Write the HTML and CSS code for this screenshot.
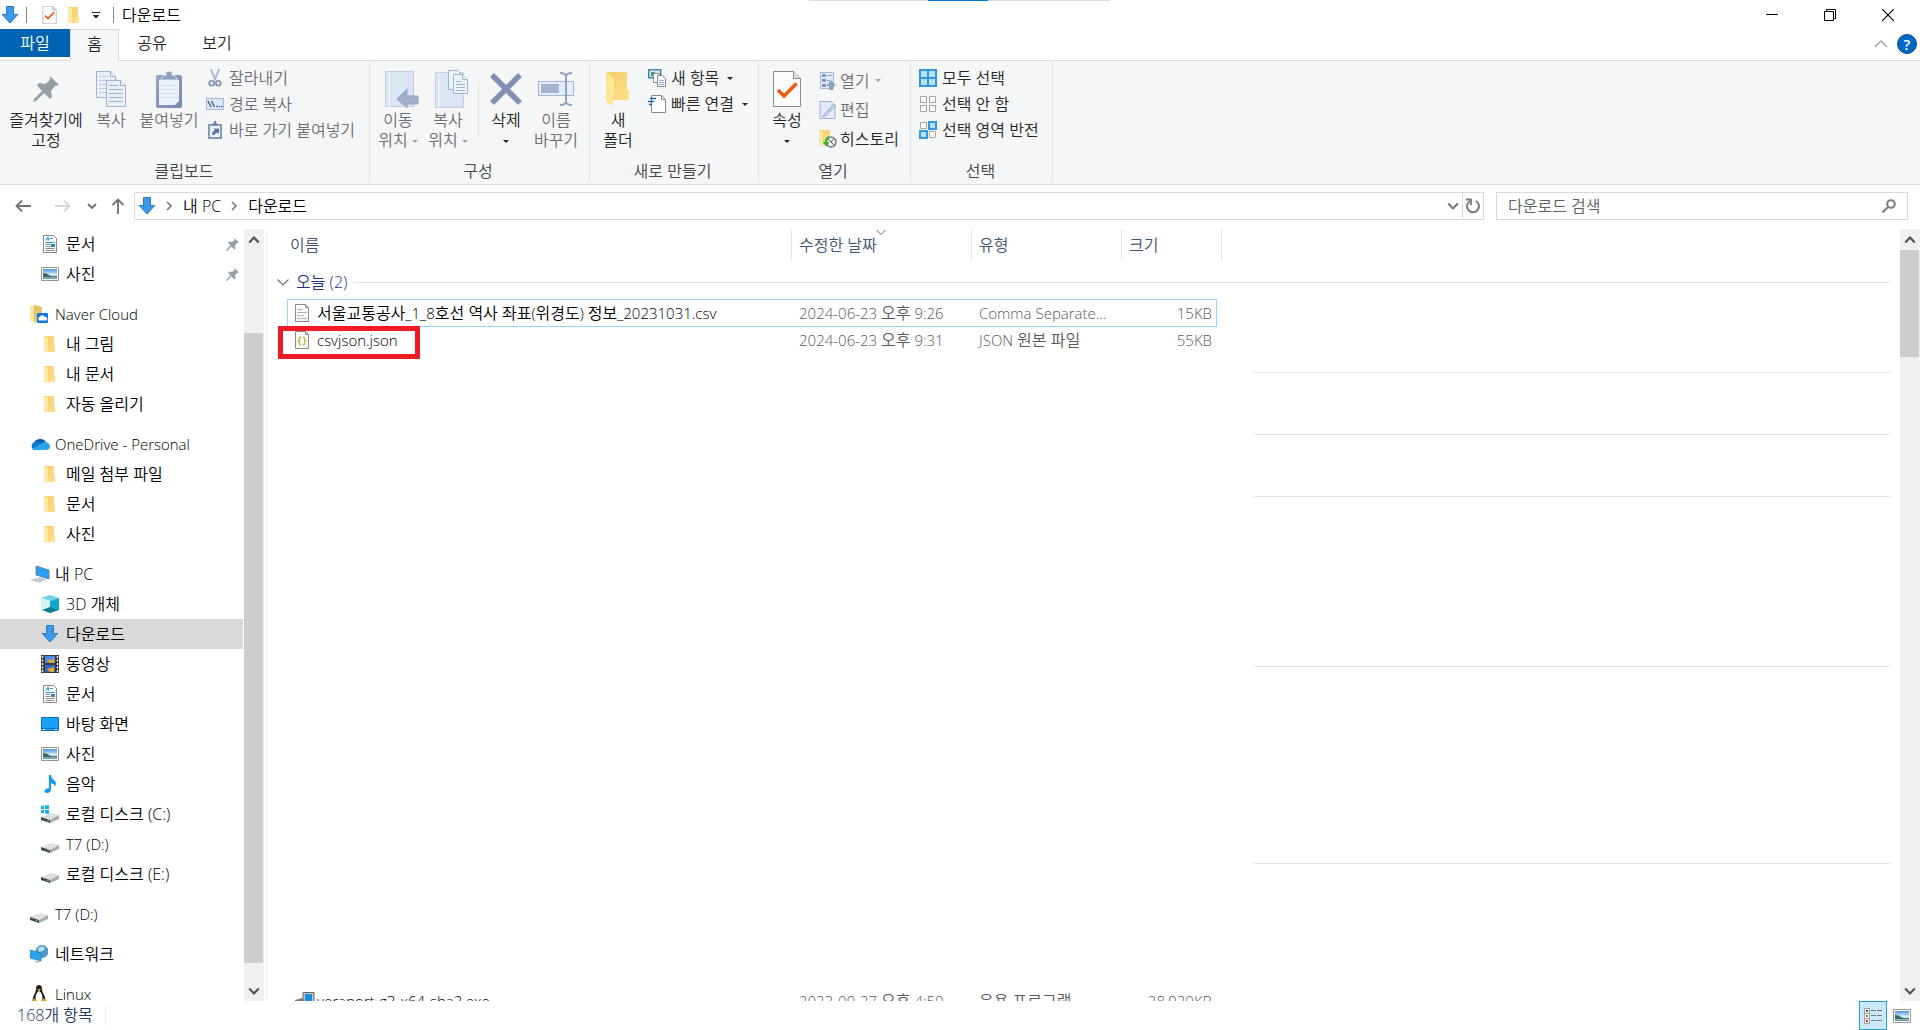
FILE: index.html
```html
<!DOCTYPE html>
<html lang="ko">
<head>
<meta charset="utf-8">
<title>다운로드</title>
<link rel="stylesheet" href="styles.css">
</head>
<body>
<svg class="defs" aria-hidden="true">
  <defs>
    <linearGradient id="g-folder" x1="0" x2="1" y1="0" y2="1"><stop offset="0" stop-color="#f3cd68"/><stop offset="1" stop-color="#ffe08c"/></linearGradient>
    <linearGradient id="g-sky" x1="0" x2="0" y1="0" y2="1"><stop offset="0" stop-color="#4f93e6"/><stop offset=".55" stop-color="#d6ecfa"/><stop offset="1" stop-color="#5f8f9a"/></linearGradient>
    <linearGradient id="g-clip" x1="0" x2="1" y1="0" y2="1"><stop offset="0" stop-color="#95a5c4"/><stop offset="1" stop-color="#7488ae"/></linearGradient>
  </defs>
  <symbol id="down" viewBox="0 0 18 18"><path d="M5.500.5h7v8h4.300L9 17 1.200 8.500h4.300z" fill="#3c99e8" stroke="#2a7cc4"/></symbol>
  <symbol id="folder" viewBox="0 0 18 18"><path d="M3 1h10v10h1v6H3z" fill="url(#g-folder)"/><path d="M3 1l4 2v11l-1 4-3-1.500z" fill="#ffe9a9"/></symbol>
  <symbol id="page-check" viewBox="0 0 28 36"><path d="M.500.500h20l7 7v28H.500z" fill="#fbfbfb" stroke="#8c8c8c"/><path d="M20.500.500v7h7" fill="#e3e3e3" stroke="#8c8c8c"/><path d="M5 19l6 6L23.500 12.500" fill="none" stroke="#f15a13" stroke-width="3.500"/></symbol>
  <symbol id="pin" viewBox="0 0 26 26"><path d="M17 0l9 9-4 1-4 5 1 6-2 2-6-6-8 8-3 1 1-3 8-8-5-6 2-2 6 1 5-4z" fill="#959fa6"/></symbol>
  <symbol id="pages" viewBox="0 0 30 36"><g fill="#e9f0fa" stroke="#9fb2d2"><path d="M.500.500h14l5 5v21H.500z"/><path d="M14.500.500v5h5"/><path d="M3 5.500h9M3 9.500h13M3 13.500h13M3 17.500h13M3 21.500h13" stroke="#bccbe3"/><path d="M10.500 9.500h14l5 5v21h-19z"/><path d="M24.500 9.500v5h5"/><path d="M13 14.500h9M13 18.500h14M13 22.500h14M13 26.500h14M13 30.500h14"/></g></symbol>
  <symbol id="paste" viewBox="0 0 26 37"><rect y="4" width="26" height="33" rx="2" fill="url(#g-clip)"/><path d="M3 9h20v21l-4 4H3z" fill="#ecf3fd"/><path d="M4 14.500h18M4 18.500h18M4 22.500h18M4 26.500h18" stroke="#cfdced"/><path d="M5 9q0-4 5-5V1l3-1 3 1v3q5 1 5 5z" fill="#8fa0bf" stroke="#f5f6f7" stroke-width=".7"/></symbol>
  <symbol id="scissors" viewBox="0 0 14 19"><path d="M2.500 0l5 12M11.500 0l-5 12" stroke="#a9b7d2" stroke-width="2"/><circle cx="3.500" cy="15" r="2.500" fill="none" stroke="#8596b7" stroke-width="2"/><circle cx="10.500" cy="15" r="2.500" fill="none" stroke="#8596b7" stroke-width="2"/></symbol>
  <symbol id="path" viewBox="0 0 18 12"><rect x=".5" y=".5" width="17" height="11" fill="#dce8f7" stroke="#a9b9d6"/><path d="M2 3l3 6M5.500 3l3 6" stroke="#50648e" stroke-width="1.500"/><path d="M10 8.500h1.500M12.500 8.500H14M15 8.500h1.500" stroke="#50648e" stroke-width="1.500"/></symbol>
  <symbol id="paste-link" viewBox="0 0 14 18"><path d="M0 3h14v15H0z" fill="#8799bb"/><path d="M2 5h10v11H2z" fill="#eaf2fc"/><path d="M4 4q0-2 2-2V0h2v2q2 0 2 2z" fill="#6f83a8"/><path d="M4 14q0-4 3-5L5.500 7.500H11V13L9.500 11.500Q7 12 6.500 14z" fill="#5f769f"/></symbol>
  <symbol id="move-to" viewBox="0 0 34 37"><path d="M.500.500h28v35H.500z" fill="#dbe5f4" stroke="#c0cfe5"/><path d="M4 1v34" stroke="#eaf0f9" stroke-width="2"/><path d="M22 18v7h11v8H22v4L12 28z" fill="#a0b0cc" stroke="#93a4c2"/></symbol>
  <symbol id="copy-to" viewBox="0 0 34 38"><path d="M.500 2.500h28v35H.500z" fill="#dbe5f4" stroke="#c0cfe5"/><path d="M4 3v34" stroke="#eaf0f9" stroke-width="2"/><g fill="#eef4fc" stroke="#9fb2d2"><path d="M13.500.500h9l5 5v14h-14z"/><path d="M18.500 4.500h9l5 5v14h-14z"/><path d="M27.500 4.500v5h5M21 11.500h5M21 14.500h9M21 17.500h9M21 20.500h9"/></g></symbol>
  <symbol id="delete" viewBox="0 0 32 32"><path d="M2 2l28 28M30 2L2 30" stroke="#8090b0" stroke-width="5.500"/></symbol>
  <symbol id="rename" viewBox="0 0 36 34"><path d="M.500 9.500h35v14H.500z" fill="#e6eefa" stroke="#a3b5d4"/><path d="M3 12h18v9H3z" fill="#a3b3d0"/><path d="M22 1q5 0 6 3 1-3 6-3M22 33q5 0 6-3 1 3 6 3M28 3v28" fill="none" stroke="#90a2c2" stroke-width="2"/></symbol>
  <symbol id="new-folder" viewBox="0 0 25 36"><path d="M1 1h21v17l2 2v9H1z" fill="url(#g-folder)"/><path d="M1 1l8 6v21l-2 7-6-5z" fill="#ffe594"/></symbol>
  <symbol id="new-item" viewBox="0 0 18 18"><path d="M.750.750h12v8h-12z" fill="#cfeaf7" stroke="#4a88a8" stroke-width="1.500"/><path d="M3 3h4v4H3z" fill="#4f9a77"/><path d="M5.500 4.500h6v9h-6z" fill="#fff" stroke="#888"/><path d="M9.500 6.500h5l3 3v8h-8z" fill="#f5faff" stroke="#888"/><path d="M11 11.500h5M11 13.500h5M11 15.500h5" stroke="#91b9e4"/></symbol>
  <symbol id="easy" viewBox="0 0 18 18"><path d="M3.500.500h10l4 4v13h-14z" fill="#fff" stroke="#8a8a8a"/><path d="M13.500.500v4h4" fill="none" stroke="#8a8a8a"/><path d="M2 3.500h6M0 6.500h6M1 9.500h3" stroke="#1566a8" stroke-width="1.500"/></symbol>
  <symbol id="open" viewBox="0 0 16 18"><path d="M.500.500h13v16H.500z" fill="#e2ebf8" stroke="#a8b9d6"/><path d="M2 2h4v3H2zM2 7h4v3H2zM2 12h4v3H2z" fill="#8195ba"/><path d="M7 3.500h5M7 8.500h3" stroke="#8fa3c6"/><path d="M11 8l5 6h-3v4H9v-4H6z" fill="#8fa1c1"/></symbol>
  <symbol id="edit" viewBox="0 0 17 18"><path d="M.500.500h11l4 4v13H.500z" fill="#e2ebf8" stroke="#9fb1d0"/><path d="M4 14L14 3l2 2L6 15l-3 1z" fill="#bfcfe8" stroke="#8fa3c6" stroke-width=".7"/></symbol>
  <symbol id="history" viewBox="0 0 18 18"><path d="M0 0h11v15H0z" fill="url(#g-folder)"/><path d="M0 0l4 2v12l-1 3-3-2z" fill="#ffe9a9"/><circle cx="12" cy="12" r="5" fill="#eee" stroke="#777" stroke-width="1.500"/><path d="M12 12l2.500-3M9 9l6 6" stroke="#666"/><path d="M10 6q-4 1-4 6H3.500l4 4.500 3-4.500H8q0-3 2-4z" fill="#27b52d"/></symbol>
  <symbol id="sel-all" viewBox="0 0 18 18"><path d="M0 0h18v18H0z" fill="#3096e6"/><path d="M2 2h6v6H2zM10 2h6v6h-6zM2 10h6v6H2zM10 10h6v6h-6z" fill="#b8e1ff"/></symbol>
  <symbol id="sel-none" viewBox="0 0 18 18"><path d="M1.500 1.500h6v6h-6zM10.500 1.500h6v6h-6zM1.500 10.500h6v6h-6zM10.500 10.500h6v6h-6z" fill="#fff" stroke="#a5a5a5"/></symbol>
  <symbol id="sel-inv" viewBox="0 0 18 18"><path d="M1.500 1.500h6v6h-6zM10.500 10.500h6v6h-6z" fill="#fff" stroke="#a5a5a5"/><path d="M9 0h9v9H9zM0 9h9v9H0z" fill="#3096e6"/><path d="M11 2h5v5h-5zM2 11h5v5H2z" fill="#b8e1ff"/></symbol>
  <symbol id="doc" viewBox="0 0 18 18"><path d="M2.500.500h10l3 3v14h-13z" fill="#fff" stroke="#8a8a8a"/><path d="M5 5.500l2-3 1 3M9 3.500h3M4.500 7.500h9" stroke="#1b93d8" stroke-width="1.200" fill="none"/><path d="M4.500 9.500h5M4.500 11.500h5M4.500 13.500h9M4.500 15.500h9" stroke="#8f8f8f"/><path d="M10 9h4v3h-4z" fill="#2f86b5"/></symbol>
  <symbol id="photo" viewBox="0 0 18 18"><path d="M.500 2.500h17v13H.500z" fill="#fff" stroke="#959595"/><path d="M2 4h14v10H2z" fill="url(#g-sky)"/><path d="M2 8q4 0 6 2t8 1v1H2z" fill="#3d6b62"/></symbol>
  <symbol id="naver" viewBox="0 0 18 18"><path d="M0 1l4-1v17l-4-1z" fill="#fbe7a6"/><path d="M4 0l8 2v13l-8 3z" fill="#e5c363"/><rect x="7" y="8" width="11" height="10" rx="1" fill="#0f79e8"/><path d="M9 15.500a2 2 0 01.500-3.500 3 3 0 015.500 0 1.800 1.800 0 011 3.500z" fill="#fff"/></symbol>
  <symbol id="onedrive" viewBox="0 0 20 14"><path d="M4 6a6.500 5.500 0 0112-1l-5 6z" fill="#0a63b8"/><path d="M4 13a4.300 4.300 0 01.5-8q3-1 5 .5l6 4z" fill="#1179cf"/><path d="M2 12l9-5q2-2.500 5-2 4 1 4 4.500 0 3.500-4 3.500H4z" fill="#28a4ea"/></symbol>
  <symbol id="pc" viewBox="0 0 20 18"><path d="M6 1l13 4v9L6 10z" fill="#2b9df0" stroke="#5b7688" stroke-width=".8"/><path d="M9 12l7 2-2 2-6-2zM0 15l6-2 8 2-4 3z" fill="#c5cbd2"/></symbol>
  <symbol id="cube" viewBox="0 0 18 18"><path d="M9 0l9 3-9 3-9-3z" fill="#6fd4e6"/><path d="M0 3l9 3v12l-9-3z" fill="#d2f2f3"/><path d="M18 3L9 6v12l9-3z" fill="#14a5cf"/><path d="M1 15l8-3 8 3-8 3z" fill="#0c7e90"/></symbol>
  <symbol id="video" viewBox="0 0 18 18"><path d="M0 0h18v18H0z" fill="#3a3a3a"/><path d="M4 1h10v7H4z" fill="#4a85e8"/><path d="M4 10h10v7H4z" fill="#3066c8"/><path d="M5 4l4 4h4V3l-3 2zM6 14l3 3h4v-5z" fill="#e4a92c"/><path d="M1.500 1v16M16.500 1v16" stroke="#eee" stroke-width="1.500" stroke-dasharray="2 1.500"/></symbol>
  <symbol id="desktop" viewBox="0 0 18 18"><path d="M.500 2.500h17v13H.500z" fill="#18a0f8" stroke="#0b72bd"/><path d="M1 13.500h16" stroke="#0b72bd"/><path d="M2 14.500h2M14 14.500h2" stroke="#fff"/></symbol>
  <symbol id="music" viewBox="0 0 18 18"><path d="M8 0h2q0 3 3 5t1 7q0-3-4-4v6q0 4-4 4-2.500 0-2.500-2T8 13z" fill="#0f9bf2"/></symbol>
  <symbol id="drive" viewBox="0 0 18 18"><path d="M0 12l10-4 8 2-9 5z" fill="#dfe0e3"/><path d="M0 12l9 3v3l-9-3z" fill="#454a4a"/><path d="M9 15l9-5v4l-9 4z" fill="#a9abb0"/><path d="M6 15.500h2" stroke="#3ad33a"/></symbol>
  <symbol id="windrive" viewBox="0 0 18 18"><use href="#drive"/><path d="M0 1l3-.5V4H0zM4 .4L8 0v4H4zM0 5h3v3.500L0 8zM4 5h4v4l-4-.5z" fill="#12b5f0"/></symbol>
  <symbol id="network" viewBox="0 0 18 18"><circle cx="12" cy="6.500" r="6.500" fill="#4e9cc2"/><path d="M8 3q4-3 7 0l-2 3-4 1z" fill="#b5e0ee"/><path d="M0 5l11 3v8L0 13z" fill="#29a3f3" stroke="#3880b0" stroke-width=".8"/><path d="M4 16l4-1 3 2-4 1z" fill="#bcc7cf"/></symbol>
  <symbol id="tux" viewBox="0 0 18 18"><path d="M9 0q3 0 3 4 0 3 2 6t1 7H3q-1-3 1-7t2-6Q6 0 9 0z" fill="#1b1b1b"/><path d="M9 6q2.500 1 3.500 6 0 5-3.500 5t-3.500-5Q6.500 7 9 6z" fill="#fff"/><path d="M7 4h4l-2 2.500zM1 16l4-3 2 5H1zM17 16l-4-3-2 5h6z" fill="#e8a80c"/></symbol>
  <symbol id="csv" viewBox="0 0 14 18"><path d="M.500.500h10l3 3v14H.500z" fill="#fafafa" stroke="#8a8a8a"/><path d="M10.500.500v3h3" fill="none" stroke="#8a8a8a"/><path d="M2 5.500h6M2 8.500h10M2 11.500h7M2 14.500h10" stroke="#b5b5b5"/></symbol>
  <symbol id="json" viewBox="0 0 14 18"><path d="M.500.500h10l3 3v14H.500z" fill="#fafafa" stroke="#8a8a8a"/><path d="M10.500.500v3h3" fill="none" stroke="#8a8a8a"/><path d="M6 6Q4.500 6 4.500 8T3 10q1.500 0 1.500 2T6 14M8 6q1.500 0 1.500 2T11 10q-1.500 0-1.500 2T8 14" fill="none" stroke="#bcb83a" stroke-width="1.300"/></symbol>
  <symbol id="exe" viewBox="0 0 20 18"><path d="M8 .5h11v10H8z" fill="#c3c7cc" stroke="#666"/><path d="M10 2h7v7h-7z" fill="#178de0"/><path d="M0 8l8-2v12H0z" fill="#777"/><path d="M9 11h10v5H9z" fill="#999"/></symbol>
  <symbol id="details" viewBox="0 0 18 16"><path d="M.500.500h5v5h-5zM.500 5.500h5v5h-5zM.500 10.500h5v5h-5z" fill="#fff" stroke="#999"/><path d="M2 2h2v2H2z" fill="#27638f"/><path d="M2 7h2v2H2z" fill="#7b8b22"/><path d="M2 12h2v2H2z" fill="#c22"/><path d="M7 2.500h5M13 2.500h5M7 7.500h5M13 7.500h5M7 12.500h5M13 12.500h5" stroke="#777"/></symbol>
  <symbol id="back" viewBox="0 0 16 12"><path d="M16 6H1.500M7 .5L1.500 6 7 11.500" fill="none" stroke="currentColor" stroke-width="1.800"/></symbol>
  <symbol id="chev-down" viewBox="0 0 10 10"><path d="M1 3l4 4 4-4" fill="none" stroke="currentColor" stroke-width="1.800"/></symbol>
  <symbol id="chev-thin" viewBox="0 0 12 12"><path d="M.500 3.500L6 9l5.500-5.500" fill="none" stroke="currentColor" stroke-width="1.200"/></symbol>
  <symbol id="chev-right" viewBox="0 0 10 10"><path d="M3 1l4 4-4 4" fill="none" stroke="currentColor" stroke-width="1.600"/></symbol>
  <symbol id="refresh" viewBox="0 0 16 16"><path d="M11 3a6 6 0 11-6 0" fill="none" stroke="#7a7a7a" stroke-width="2"/><path d="M1 1.500h5V7" fill="none" stroke="#7a7a7a" stroke-width="1.800"/></symbol>
  <symbol id="search" viewBox="0 0 14 14"><circle cx="9" cy="5" r="3.800" fill="none" stroke="#7a7a7a" stroke-width="2"/><path d="M6 8l-5.500 5.500" stroke="#7a7a7a" stroke-width="2"/></symbol>
</svg>

<div class="peek"><span class="peek-mark"></span></div>

<header class="titlebar">
  <svg class="i18"><use href="#down"/></svg>
  <span class="bar"></span>
  <button class="qa" aria-label="속성"><svg width="15" height="18"><use href="#page-check"/></svg></button>
  <button class="qa qa-folder" aria-label="새 폴더"><svg class="i18"><use href="#folder"/></svg></button>
  <button class="qa qa-more" aria-label="빠른 실행 사용자 지정"><svg width="8" height="8"><path d="M0 1.500h8M1.500 4.500h5L4 7z" stroke="#222" fill="#222" stroke-width="1"/></svg></button>
  <span class="bar"></span>
  <h1 class="title">다운로드</h1>
  <div class="winctl">
    <button aria-label="최소화"><svg width="12" height="12"><path d="M0 5.500h12" stroke="#000"/></svg></button>
    <button aria-label="이전 크기로"><svg width="12" height="12"><path d="M.500 2.500h9v9h-9zM2.500 2.500v-2h9v9h-2" fill="none" stroke="#000"/></svg></button>
    <button aria-label="닫기"><svg width="12" height="12"><path d="M0 0l12 12M12 0L0 12" stroke="#000" stroke-width="1.200"/></svg></button>
  </div>
</header>

<nav class="tabs">
  <button class="tab tab-file">파일</button>
  <button class="tab tab-on">홈</button>
  <button class="tab">공유</button>
  <button class="tab tab-view">보기</button>
  <div class="tabs-end">
    <button class="fold" aria-label="리본 최소화"><svg width="14" height="8"><path d="M1 7l6-6 6 6" fill="none" stroke="#a0a0a0" stroke-width="1.300"/></svg></button>
    <button class="help" aria-label="도움말">?</button>
  </div>
</nav>

<section class="ribbon">
  <div class="group group-clip">
    <div class="tools">
      <button class="big w82"><svg width="26" height="26"><use href="#pin"/></svg><span>즐겨찾기에<br>고정</span></button>
      <button class="big w48" disabled><svg width="30" height="36"><use href="#pages"/></svg><span>복사</span></button>
      <button class="big w68" disabled><svg width="26" height="37"><use href="#paste"/></svg><span>붙여넣기</span></button>
      <div class="small">
        <button disabled><svg class="i18"><use href="#scissors"/></svg>잘라내기</button>
        <button disabled><svg class="i18"><use href="#path"/></svg>경로 복사</button>
        <button disabled><svg class="i18"><use href="#paste-link"/></svg>바로 가기 붙여넣기</button>
      </div>
    </div>
    <div class="caption">클립보드</div>
  </div>
  <div class="group group-org">
    <div class="tools">
      <button class="big big-to" disabled><svg width="34" height="37"><use href="#move-to"/></svg><span>이동<br>위치 <i class="caret"></i></span></button>
      <button class="big big-to" disabled><svg width="34" height="38"><use href="#copy-to"/></svg><span>복사<br>위치 <i class="caret"></i></span></button>
      <span class="split"></span>
      <button class="big"><svg width="32" height="32"><use href="#delete"/></svg><span>삭제<br><i class="caret"></i></span></button>
      <button class="big" disabled><svg width="36" height="34"><use href="#rename"/></svg><span>이름<br>바꾸기</span></button>
    </div>
    <div class="caption">구성</div>
  </div>
  <div class="group group-new">
    <div class="tools">
      <button class="big"><svg width="25" height="36"><use href="#new-folder"/></svg><span>새<br>폴더</span></button>
      <div class="small">
        <button><svg class="i18"><use href="#new-item"/></svg>새 항목<i class="caret"></i></button>
        <button><svg class="i18"><use href="#easy"/></svg>빠른 연결<i class="caret"></i></button>
      </div>
    </div>
    <div class="caption">새로 만들기</div>
  </div>
  <div class="group group-open">
    <div class="tools">
      <button class="big"><svg width="28" height="36"><use href="#page-check"/></svg><span>속성<br><i class="caret"></i></span></button>
      <div class="small small-tall">
        <button disabled><svg class="i18"><use href="#open"/></svg>열기<i class="caret"></i></button>
        <button disabled><svg class="i18"><use href="#edit"/></svg>편집</button>
        <button><svg class="i18"><use href="#history"/></svg>히스토리</button>
      </div>
    </div>
    <div class="caption">열기</div>
  </div>
  <div class="group group-select">
    <div class="tools">
      <div class="small">
        <button><svg class="i18"><use href="#sel-all"/></svg>모두 선택</button>
        <button><svg class="i18"><use href="#sel-none"/></svg>선택 안 함</button>
        <button><svg class="i18"><use href="#sel-inv"/></svg>선택 영역 반전</button>
      </div>
    </div>
    <div class="caption">선택</div>
  </div>
</section>

<div class="address-row">
  <div class="history">
    <button aria-label="뒤로"><svg width="16" height="12"><use href="#back"/></svg></button>
    <button class="faint" aria-label="앞으로"><svg width="16" height="12" class="flip"><use href="#back"/></svg></button>
    <button class="recent" aria-label="최근 위치"><svg width="10" height="10"><use href="#chev-down"/></svg></button>
    <button class="up" aria-label="위로"><svg width="12" height="16"><path d="M6 16V1.500M.500 7L6 1.500 11.500 7" fill="none" stroke="currentColor" stroke-width="1.800"/></svg></button>
  </div>
  <div class="crumbs">
    <svg class="i18"><use href="#down"/></svg>
    <svg class="step" width="10" height="10"><use href="#chev-right"/></svg>
    <a href="#pc">내 PC</a>
    <svg class="step" width="10" height="10"><use href="#chev-right"/></svg>
    <a href="#downloads">다운로드</a>
    <button class="drop" aria-label="이전 위치"><svg width="12" height="12"><use href="#chev-down"/></svg></button>
    <button class="reload" aria-label="새로 고침"><svg width="16" height="16"><use href="#refresh"/></svg></button>
  </div>
  <form class="search">
    <input type="text" placeholder="다운로드 검색" aria-label="다운로드 검색">
    <button type="button" aria-label="검색"><svg width="14" height="14"><use href="#search"/></svg></button>
  </form>
</div>

<div class="content">
  <aside class="side">
    <nav class="tree">
      <ul>
        <li><a href="#q1"><svg class="i18"><use href="#doc"/></svg>문서<svg class="pinned" width="13" height="13"><use href="#pin"/></svg></a></li>
        <li><a href="#q2"><svg class="i18"><use href="#photo"/></svg>사진<svg class="pinned" width="13" height="13"><use href="#pin"/></svg></a></li>
      </ul>
      <ul>
        <li><a class="root latin" href="#n"><svg class="i18"><use href="#naver"/></svg>Naver Cloud</a></li>
        <li><a href="#n1"><svg class="i18"><use href="#folder"/></svg>내 그림</a></li>
        <li><a href="#n2"><svg class="i18"><use href="#folder"/></svg>내 문서</a></li>
        <li><a href="#n3"><svg class="i18"><use href="#folder"/></svg>자동 올리기</a></li>
      </ul>
      <ul>
        <li><a class="root latin" href="#o"><svg class="i20" height="14"><use href="#onedrive"/></svg>OneDrive - Personal</a></li>
        <li><a href="#o1"><svg class="i18"><use href="#folder"/></svg>메일 첨부 파일</a></li>
        <li><a href="#o2"><svg class="i18"><use href="#folder"/></svg>문서</a></li>
        <li><a href="#o3"><svg class="i18"><use href="#folder"/></svg>사진</a></li>
      </ul>
      <ul>
        <li><a class="root" href="#pc"><svg class="i20" height="18"><use href="#pc"/></svg>내 PC</a></li>
        <li><a href="#p1"><svg class="i18"><use href="#cube"/></svg>3D 개체</a></li>
        <li><a class="current" href="#downloads"><svg class="i18"><use href="#down"/></svg>다운로드</a></li>
        <li><a href="#p3"><svg class="i18"><use href="#video"/></svg>동영상</a></li>
        <li><a href="#p4"><svg class="i18"><use href="#doc"/></svg>문서</a></li>
        <li><a href="#p5"><svg class="i18"><use href="#desktop"/></svg>바탕 화면</a></li>
        <li><a href="#p6"><svg class="i18"><use href="#photo"/></svg>사진</a></li>
        <li><a href="#p7"><svg class="i18"><use href="#music"/></svg>음악</a></li>
        <li><a href="#c"><svg class="i18"><use href="#windrive"/></svg>로컬 디스크 (C:)</a></li>
        <li><a class="latin" href="#d"><svg class="i18"><use href="#drive"/></svg>T7 (D:)</a></li>
        <li><a href="#e"><svg class="i18"><use href="#drive"/></svg>로컬 디스크 (E:)</a></li>
      </ul>
      <ul><li><a class="root latin" href="#t7"><svg class="i18"><use href="#drive"/></svg>T7 (D:)</a></li></ul>
      <ul><li><a class="root" href="#net"><svg class="i18"><use href="#network"/></svg>네트워크</a></li></ul>
      <ul><li><a class="root latin" href="#linux"><svg class="i18"><use href="#tux"/></svg>Linux</a></li></ul>
    </nav>
    <div class="scroll scroll-side">
      <button aria-label="위로 스크롤"><svg class="upside" width="12" height="12"><use href="#chev-down"/></svg></button>
      <span class="lead"></span><span class="thumb"></span><span class="rest"></span>
      <button aria-label="아래로 스크롤"><svg width="12" height="12"><use href="#chev-down"/></svg></button>
    </div>
  </aside>

  <main class="list">
    <div class="files">
      <table>
        <colgroup><col class="c-gut"><col class="c-name"><col class="c-date"><col class="c-type"><col class="c-size"><col class="c-end"><col></colgroup>
        <thead>
          <tr><th colspan="2" class="th-name">이름</th><th><span class="sorted">수정한 날짜<svg class="sort" width="10" height="10"><use href="#chev-thin"/></svg></span></th><th>유형</th><th colspan="2">크기</th><th class="th-last"></th></tr>
        </thead>
        <tbody>
          <tr><td colspan="7"><div class="day"><svg width="12" height="12"><use href="#chev-thin"/></svg><span class="day-name">오늘 (2)</span><span class="day-line"></span></div></td></tr>
          <tr class="file focus"><td></td><td class="name"><div class="cell"><svg width="14" height="18"><use href="#csv"/></svg><span><span class="ko">서울교통공사</span>_1_8<span class="ko">호선 역사 좌표</span>(<span class="ko">위경도</span>) <span class="ko">정보</span>_20231031.csv</span></div></td><td>2024-06-23 <span class="ko">오후</span> 9:26</td><td>Comma Separate...</td><td class="size">15KB</td><td></td><td></td></tr>
          <tr class="file"><td></td><td class="name"><div class="cell"><svg width="14" height="18"><use href="#json"/></svg><span>csvjson.json</span><span class="mark"></span></div></td><td>2024-06-23 <span class="ko">오후</span> 9:31</td><td>JSON <span class="ko">원본 파일</span></td><td class="size">55KB</td><td></td><td></td></tr>
        </tbody>
      </table>
      <div class="rules"><hr class="r-a"><hr class="r-b"><hr class="r-b"><hr class="r-c"><hr class="r-d"></div>
      <div class="cut">
        <table>
          <colgroup><col class="c-gut"><col class="c-name"><col class="c-date"><col class="c-type"><col class="c-size"><col class="c-end"><col></colgroup>
          <tbody>
            <tr class="file"><td></td><td class="name"><div class="cell"><svg width="20" height="18"><use href="#exe"/></svg><span>veraport-g3-x64-sha2.exe</span></div></td><td>2023-09-27 <span class="ko">오후</span> 4:50</td><td><span class="ko">응용 프로그램</span></td><td class="size">28,920KB</td><td></td><td></td></tr>
          </tbody>
        </table>
      </div>
    </div>
    <div class="scroll scroll-main">
      <button aria-label="위로 스크롤"><svg class="upside" width="12" height="12"><use href="#chev-down"/></svg></button>
      <span class="thumb"></span><span class="rest"></span>
      <button aria-label="아래로 스크롤"><svg width="12" height="12"><use href="#chev-down"/></svg></button>
    </div>
  </main>
</div>

<footer class="status">
  <span class="count">168개 항목</span>
  <div class="views">
    <button class="view view-on" aria-label="자세히"><svg width="18" height="16"><use href="#details"/></svg></button>
    <button class="view" aria-label="큰 아이콘"><svg class="i18"><use href="#photo"/></svg></button>
  </div>
</footer>
</body>
</html>
```
FILE: styles.css
```css
* { box-sizing: border-box; }

body {
  margin: 0;
  height: 100vh;
  display: flex;
  flex-direction: column;
  overflow: hidden;
  background: #fff;
  color: #000;
  font: 350 16px/20px "Open Sans", "Noto Sans CJK KR", sans-serif;
}

button {
  border: 0;
  padding: 0;
  margin: 0;
  background: none;
  color: inherit;
  font: inherit;
  display: flex;
  align-items: center;
  justify-content: center;
}

a { color: inherit; text-decoration: none; }
svg { display: block; flex: none; }
.defs { position: absolute; width: 0; height: 0; }
.i18 { width: 18px; height: 18px; }
.i20 { width: 20px; }
.flip { transform: scaleX(-1); }
.upside { transform: rotate(180deg); }
.latin { font-size: 15px; }
.ko { font-size: 16px; }

/* Edge of the bar docked above the window */
.peek {
  position: absolute;
  top: 0;
  left: 809px;
  width: 301px;
  height: 1px;
  background: #dcdcdc;
}
.peek-mark { display: block; width: 60px; height: 1px; margin-left: 119px; background: #0078d7; }

/* Title bar */
.titlebar { display: flex; align-items: center; height: 29px; padding-left: 1px; flex: none; }
.bar { width: 1px; height: 16px; margin: 0 8px 0 7px; background: #8a8a8a; }
.titlebar .bar + .qa { margin-left: 7px; }
.qa { margin-right: 8px; }
.qa-folder { margin-right: 9px; }
.qa-more { margin-right: 6px; }
.title { margin: 0; font-size: 16px; line-height: 20px; font-weight: inherit; }
.winctl { display: flex; margin-left: auto; padding-right: 3px; }
.winctl button { width: 58px; height: 29px; }

/* Tabs */
.tabs { display: flex; height: 32px; flex: none; border-bottom: 1px solid #dadbdc; }
.tab { width: 66px; height: 28px; color: #262626; }
.tab-view { width: 64px; }
.tab-file { width: 70px; background: #0063b1; color: #fff; }
.tab-on {
  width: 49px;
  height: 32px;
  padding-bottom: 4px;
  border: 1px solid #dadbdc;
  border-bottom: 0;
  background: #f5f6f7;
}
.tabs-end { display: flex; align-items: center; gap: 9px; margin-left: auto; padding: 0 3px 2px 0; }
.help {
  width: 20px;
  height: 20px;
  border-radius: 50%;
  background: #0068c8;
  border: 1px solid #124c86;
  color: #fff;
  font-size: 15px;
  font-weight: 600;
}

/* Ribbon */
.ribbon { display: flex; height: 124px; padding: 2px 0; flex: none; background: #f5f6f7; border-bottom: 1px solid #dadbdc; }
.group { display: flex; flex-direction: column; border-right: 1px solid #e2e3e4; padding-left: 3px; }
.group-clip { width: 370px; padding-left: 5px; }
.group-org { width: 220px; }
.group-new { width: 169px; }
.group-open { width: 152px; }
.group-select { width: 142px; padding-left: 8px; }
.tools { display: flex; flex: 1; }
.caption { text-align: center; line-height: 20px; padding: 0 6px 1px 0; color: #444; }
.group-select .caption { padding-right: 10px; }
.big {
  display: grid;
  grid-template-rows: 42px auto;
  align-content: start;
  justify-items: center;
  width: 50px;
  padding-top: 5px;
  color: #262626;
  white-space: nowrap;
}
.big svg { align-self: center; }
.big-to svg { margin-left: 8px; }
.w82 { width: 82px; }
.w48 { width: 48px; }
.w68 { width: 68px; }
button:disabled { color: #6e6e6e; }
.split { width: 1px; height: 55px; margin: 19px 2px 0 5px; background: #e2e3e4; }
.small { display: flex; flex-direction: column; align-items: flex-start; padding: 2px 0 0 5px; }
.small button { height: 26px; gap: 5px; color: #262626; white-space: nowrap; }
.small button:disabled { color: #6e6e6e; }
.group-clip .small { padding-left: 3px; }
.group-select .small { padding-left: 0; }
.small-tall { padding: 3px 0 0 7px; }
.small-tall button { height: 29px; gap: 3px; }
.caret {
  display: inline-block;
  border: 3px solid transparent;
  border-top-color: currentColor;
  border-bottom: 0;
  vertical-align: middle;
}
.small .caret { margin-left: 3px; }
:disabled .caret { opacity: .6; }

/* Address row */
.address-row { display: flex; align-items: center; gap: 12px; height: 44px; padding: 0 12px 2px 0; flex: none; }
.history { display: flex; align-items: center; width: 122px; padding-left: 15px; color: #707070; }
.history .faint { margin-left: 24px; color: #d5d5d5; }
.history .recent { margin-left: 16px; }
.history .up { margin-left: 15px; }
.crumbs { display: flex; align-items: center; flex: 1; height: 28px; border: 1px solid #d9d9d9; padding-left: 3px; }
.step { margin: 0 9px 0 8px; color: #777; }
.drop { margin-left: auto; width: 18px; height: 26px; color: #777; }
.reload { width: 21px; height: 26px; border-left: 1px solid #d9d9d9; }
.search { display: flex; width: 412px; height: 28px; border: 1px solid #d9d9d9; }
.search input { flex: 1; min-width: 0; border: 0; outline: 0; padding: 0 11px; background: none; font: inherit; }
.search input::placeholder { color: #606060; opacity: 1; }
.search button { width: 36px; }

/* Navigation pane */
.content { display: flex; flex: 1; min-height: 0; }
.side { display: flex; width: 267px; flex: none; padding-right: 2px; border-right: 1px solid #f2f2f2; }
.tree { flex: 1; overflow: hidden; }
.tree ul { list-style: none; margin: 0 0 10px; padding: 0; }
.tree a { display: flex; align-items: center; gap: 7px; height: 30px; margin-right: 1px; padding-left: 41px; white-space: nowrap; }
.tree .root { padding-left: 30px; gap: 7px; }
.tree .root .i20 { margin-right: -2px; }
.tree .current { background: #d9d9d9; }
.pinned { margin: 0 4px 0 auto; }

/* Scroll bars */
.scroll { display: flex; flex-direction: column; width: 20px; flex: none; background: #f0f0f0; color: #505050; }
.scroll button { height: 21px; flex: none; }
.thumb { width: 19px; background: #cdcdcd; }
.scroll-side .lead { flex: 83; }
.scroll-side .thumb { flex: 630; }
.scroll-side .rest { flex: 17; }
.scroll-main .thumb { flex: 107; }
.scroll-main .rest { flex: 623; }

/* File list */
.list { display: flex; flex: 1; min-width: 0; }
.files { display: flex; flex-direction: column; flex: 1; min-width: 0; padding-right: 10px; overflow: hidden; }
table { width: 100%; table-layout: fixed; border-spacing: 0; }
.c-gut { width: 20px; }
.c-name { width: 504px; }
.c-date { width: 180px; }
.c-type { width: 150px; }
.c-size { width: 96px; }
.c-end { width: 4px; }
th { height: 32px; padding: 0 7px; text-align: left; font-weight: inherit; color: #3f5470; border-left: 1px solid #e5e5e5; }
.th-name { padding-left: 23px; border-left: 0; }
.sorted { position: relative; display: block; }
.sort { position: absolute; left: 77px; top: -8px; color: #666; }
td { padding: 0; white-space: nowrap; }
.day { display: flex; align-items: center; height: 38px; padding: 4px 0 0 10px; gap: 7px; color: #707070; }
.day-name { color: #1e3287; }
.day-line { flex: 1; height: 1px; background: #e2e2e2; }
.file td { height: 27px; padding: 0 0 1px 8px; font-size: 15px; line-height: 20px; color: #595959; }
.file td.name { color: #000; }
.file td.size { text-align: right; padding: 0 5px 1px 0; }
.file td:first-child { padding: 0; }
.cell { position: relative; display: flex; align-items: center; gap: 8px; }
.focus td { height: 28px; border-top: 1px solid #99d1ff; border-bottom: 1px solid #99d1ff; }
.focus td:first-child, .focus td:nth-child(n+6) { border: 0; }
.focus td.name { border-left: 1px solid #99d1ff; padding-left: 7px; }
.focus td.size { border-right: 1px solid #99d1ff; padding-right: 4px; }
.mark { position: absolute; left: -17px; top: -4px; width: 142px; height: 33px; border: 5px solid #ed1c24; }
.rules { flex: 1; min-height: 0; margin-left: 987px; }
.rules hr { margin: 0; border: 0; border-bottom: 1px solid #e2e2e2; }
.r-a { height: 19px; }
.r-b { height: 62px; }
.r-c { height: 170px; }
.r-d { height: 197px; }
.cut { height: 13px; flex: none; overflow: hidden; }
.cut .cell { gap: 2px; }

/* Status bar */
.status { display: flex; height: 29px; flex: none; padding: 0 0 0 17px; color: #1e395b; }
.count { margin-top: 4px; height: 20px; line-height: 20px; padding-right: 12px; border-right: 1px solid #ededed; }
.views { display: flex; margin-left: auto; padding-right: 3px; }
.view { width: 30px; height: 29px; }
.view-on { width: 28px; border: 1px solid #26a0da; background: #cbe8f6; }
```
